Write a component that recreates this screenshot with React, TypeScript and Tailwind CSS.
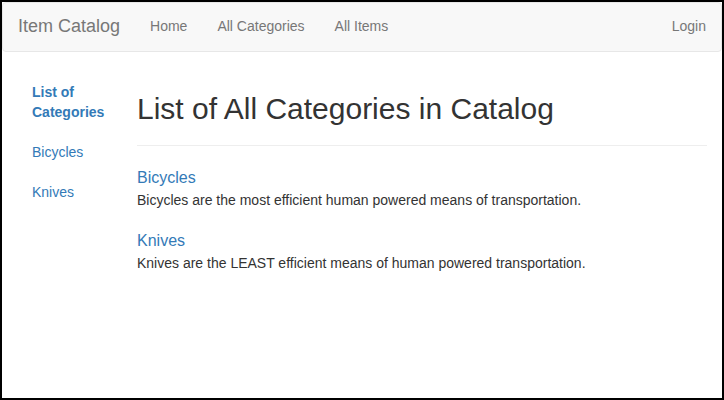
import React from "react";

export default function App() {
  return (
    <div
      className="w-[724px] h-[400px] border-2 border-black bg-white box-border overflow-hidden text-[14px] text-[#333]"
      style={{ fontFamily: '"Liberation Sans", Arial, sans-serif' }}
    >
      <nav className="h-[50px] border border-[#e7e7e7] rounded-[4px] bg-[#f8f8f8] flex items-center pb-[2px]">
        <span className="pl-[15px] pr-[15px] text-[18px] leading-[20px] text-[#777]">Item Catalog</span>
        <a className="px-[15px] leading-[20px] text-[#777]">Home</a>
        <a className="px-[15px] leading-[20px] text-[#777]">All Categories</a>
        <a className="px-[15px] leading-[20px] text-[#777]">All Items</a>
        <div className="flex-1" />
        <a className="px-[15px] leading-[20px] text-[#777]">Login</a>
      </nav>
      <div className="flex mt-[20px]">
        <div className="w-[120px] px-[15px] shrink-0">
          <ul className="flex flex-col">
            <li className="pl-[15px] py-[10px] leading-[20px] font-bold text-[#337ab7]">List of Categories</li>
            <li className="pl-[15px] py-[10px] leading-[20px] text-[#337ab7]">Bicycles</li>
            <li className="pl-[15px] py-[10px] leading-[20px] text-[#337ab7]">Knives</li>
          </ul>
        </div>
        <div className="flex-1 px-[15px]">
          <h2 className="mt-[20px] mb-[10px] text-[30px] leading-[33px] font-normal">
            List of All Categories in Catalog
          </h2>
          <hr className="mt-[20px] mb-[22px] border-0 border-t border-[#eee]" />
          <div>
            <div className="text-[16px] leading-[19px] text-[#337ab7]">Bicycles</div>
            <p className="mt-[3px] leading-[20px]">Bicycles are the most efficient human powered means of transportation.</p>
          </div>
          <div className="mt-[21px]">
            <div className="text-[16px] leading-[19px] text-[#337ab7]">Knives</div>
            <p className="mt-[3px] leading-[20px]">Knives are the LEAST efficient means of human powered transportation.</p>
          </div>
        </div>
      </div>
    </div>
  );
}
